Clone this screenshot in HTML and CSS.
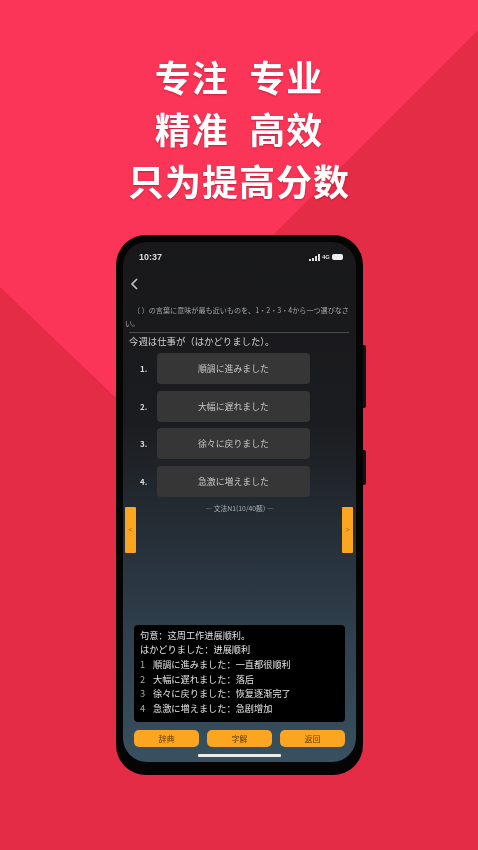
FILE: index.html
```html
<!DOCTYPE html>
<html lang="zh-CN">
<head>
    <meta charset="UTF-8">
    <meta name="viewport" content="width=device-width, initial-scale=1.0">
    <title>专注 专业</title>
    <link rel="stylesheet" href="styles.css">
</head>
<body>
    <div class="backdrop"></div>

    <header class="slogan">
        <p>专注&nbsp;&nbsp;专业</p>
        <p>精准&nbsp;&nbsp;高效</p>
        <p>只为提高分数</p>
    </header>

    <section class="phone">
        <span class="side-key side-key-top"></span>
        <span class="side-key side-key-bottom"></span>

        <div class="screen">
            <div class="status-bar">
                <span>10:37</span>
                <span class="status-icons">
                    <svg width="11" height="7" viewBox="0 0 11 7"><path d="M0 5h2v2H0zM3 4h2v3H3zM6 2h2v5H6zM9 0h2v7H9z" fill="#ddd"/></svg>
                    <span class="network">4G</span>
                    <span class="battery"></span>
                </span>
            </div>

            <svg class="back" width="8" height="12" viewBox="0 0 8 12"><path d="M7 1 2 6l5 5" fill="none" stroke="#c8c8c8" stroke-width="1.6"/></svg>

            <p class="instruction">（ ）の言葉に意味が最も近いものを、1・2・3・4から一つ選びなさい。</p>
            <div class="divider"></div>
            <p class="sentence">今週は仕事が（はかどりました）。</p>

            <div class="options">
                <div class="option"><span class="option-num">1.</span><span class="option-text">順調に進みました</span></div>
                <div class="option"><span class="option-num">2.</span><span class="option-text">大幅に遅れました</span></div>
                <div class="option"><span class="option-num">3.</span><span class="option-text">徐々に戻りました</span></div>
                <div class="option"><span class="option-num">4.</span><span class="option-text">急激に増えました</span></div>
            </div>

            <p class="source">— 文法N1(10/40题) —</p>

            <div class="pager">
                <span class="pager-tab">&lt;</span>
                <span class="pager-tab">&gt;</span>
            </div>

            <div class="answer">
                <p>句意：这周工作进展顺利。</p>
                <p>はかどりました：进展顺利</p>
                <p><span class="answer-num">1</span>順調に進みました：一直都很顺利</p>
                <p><span class="answer-num">2</span>大幅に遅れました：落后</p>
                <p><span class="answer-num">3</span>徐々に戻りました：恢复逐渐完了</p>
                <p><span class="answer-num">4</span>急激に増えました：急剧增加</p>
            </div>

            <div class="actions">
                <button class="action">辞典</button>
                <button class="action">字解</button>
                <button class="action">返回</button>
            </div>

            <div class="home-bar"></div>
        </div>
    </section>
</body>
</html>
```

FILE: styles.css
```css
html, body {
    margin: 0;
    padding: 0;
}

body {
    position: relative;
    width: 478px;
    height: 850px;
    overflow: hidden;
    background: #e52c46;
    color: #fff;
    font-family: "Noto Sans CJK SC", "Noto Sans CJK JP", sans-serif;
}

p {
    margin: 0;
}

.backdrop {
    position: absolute;
    inset: 0;
    background: #fb3557;
    clip-path: polygon(0 0, 478px 0, 478px 30px, 200px 308px, 115px 397px, 0 287px);
}

.slogan {
    position: relative;
    padding-top: 50px;
    text-align: center;
    font-size: 36px;
    font-weight: 700;
    line-height: 52px;
    letter-spacing: 1px;
    word-spacing: 1px;
    text-shadow: 0 1px 2px rgba(120, 0, 20, 0.4);
    filter: blur(0.6px);
}

.phone {
    position: relative;
    box-sizing: border-box;
    width: 247px;
    height: 540px;
    margin: 29px 0 0 116px;
    padding: 7px 7px 13px;
    background: #050505;
    border-radius: 30px;
}

.side-key {
    position: absolute;
    right: -3px;
    width: 3px;
    background: #111;
    border-radius: 0 2px 2px 0;
}

.side-key-top {
    top: 110px;
    height: 63px;
}

.side-key-bottom {
    top: 215px;
    height: 35px;
}

.screen {
    position: relative;
    box-sizing: border-box;
    display: flex;
    flex-direction: column;
    height: 100%;
    padding-top: 7px;
    background: linear-gradient(#18181a 0%, #1b1c1f 35%, #2f3f4d 75%, #38505f 100%);
    border-radius: 24px;
    overflow: hidden;
    filter: blur(0.6px);
}

.status-bar {
    display: flex;
    justify-content: space-between;
    align-items: center;
    height: 16px;
    padding: 0 13px 0 16px;
    font-family: "Liberation Sans", sans-serif;
    font-size: 9px;
    font-weight: 700;
    color: #ddd;
}

.status-icons {
    display: flex;
    align-items: center;
    gap: 2px;
}

.network {
    font-size: 6px;
}

.battery {
    width: 11px;
    height: 6px;
    background: #eee;
    border-radius: 2px;
}

.back {
    margin: 13px 0 0 7px;
}

.instruction {
    margin-top: 14px;
    padding: 0 2px 2px;
    font-size: 7.1px;
    line-height: 13px;
    text-indent: 8px;
    color: #a5a5a5;
}

.divider {
    height: 1px;
    margin: 0 7px 0 6px;
    background: #4a4a4c;
}

.sentence {
    padding-left: 6px;
    font-size: 9.4px;
    line-height: 16px;
    color: #d2d2d2;
}

.options {
    display: flex;
    flex-direction: column;
    gap: 6.6px;
    margin-top: 4px;
    padding: 0 46px 0 17px;
}

.option {
    display: flex;
    align-items: center;
    gap: 12px;
}

.option-num {
    width: 5px;
    font-size: 8px;
    font-weight: 700;
    color: #d8d8d8;
}

.option-text {
    flex: 1;
    height: 31px;
    background: #363636;
    border-radius: 4px;
    font-size: 8.9px;
    line-height: 31px;
    text-align: center;
    color: #c8c8c8;
}

.source {
    margin-top: 6px;
    font-size: 6.8px;
    line-height: 10px;
    text-align: center;
    color: #aab2b8;
}

.pager {
    display: flex;
    justify-content: space-between;
    padding: 0 3px 0 2px;
    margin-top: -6px;
}

.pager-tab {
    width: 11px;
    height: 46px;
    background: #fba521;
    border-radius: 1px;
    font-family: "Liberation Sans", sans-serif;
    font-size: 7px;
    line-height: 46px;
    text-align: center;
    color: #a8660c;
}

.answer {
    box-sizing: border-box;
    height: 97px;
    margin: 72px 11px 0;
    padding: 3px 6px;
    background: #000;
    border-radius: 4px;
    font-size: 9.2px;
    line-height: 14.6px;
    color: #e4e4e4;
}

.answer-num {
    display: inline-block;
    width: 13px;
    color: #aaa;
}

.actions {
    display: flex;
    gap: 8px;
    margin: 8px 11px 0;
}

.action {
    flex: 1;
    height: 17px;
    padding: 0;
    border: none;
    background: #fba521;
    border-radius: 5px;
    font-family: inherit;
    font-size: 8px;
    color: #5f3c0c;
}

.home-bar {
    width: 83px;
    height: 3px;
    margin: 7px auto 0;
    background: #ececec;
    border-radius: 1px;
}
```
